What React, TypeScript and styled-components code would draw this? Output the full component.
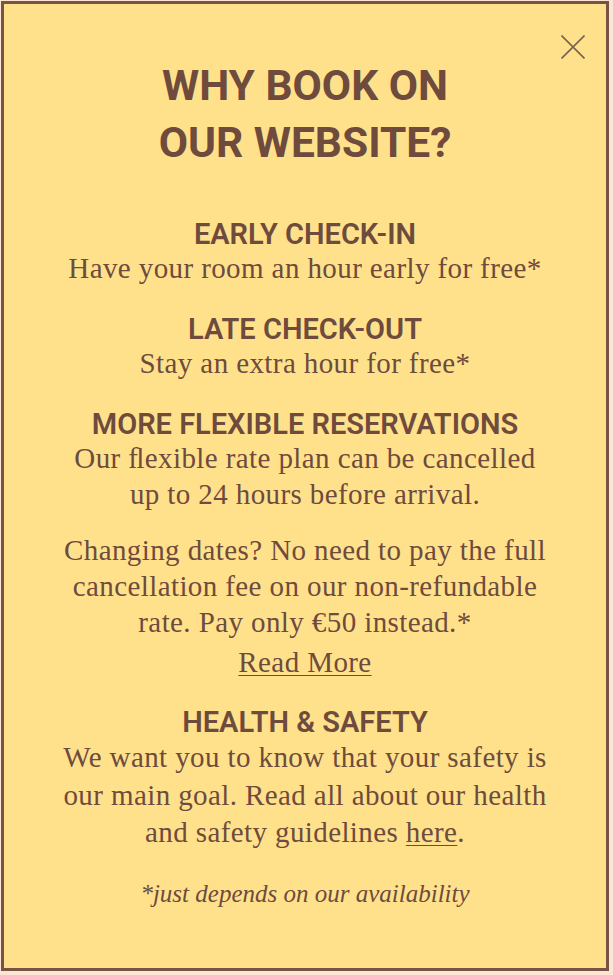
import React from "react";
import styled, { createGlobalStyle } from "styled-components";

const Global = createGlobalStyle`
  html, body { margin: 0; padding: 0; background: #fbe6d6; }
  #root { width: 613px; }
`;

const Card = styled.div`
  position: relative;
  box-sizing: border-box;
  margin: 1px 0 0 1px;
  width: 608px;
  height: 970px;
  border: 3px solid #785445;
  background: #ffe18c;
  color: #6e4b3d;
  display: flex;
  flex-direction: column;
  align-items: center;
  padding-top: 53px;
  text-align: center;
`;

const Close = styled.button`
  position: absolute;
  top: 31px;
  right: 21px;
  width: 24px;
  height: 24px;
  padding: 0;
  border: 0;
  background: transparent;
  cursor: pointer;
  display: flex;
`;

const Title = styled.h2`
  margin: 0 0 47px;
  font-family: Roboto, "Liberation Sans", sans-serif;
  font-weight: 700;
  font-size: 42.5px;
  line-height: 57px;
`;

const Section = styled.section<{ $gap?: number }>`
  display: flex;
  flex-direction: column;
  align-items: center;
  margin-bottom: ${(p) => p.$gap ?? 27}px;
`;

const Heading = styled.h3`
  margin: 0;
  font-family: Roboto, "Liberation Sans", sans-serif;
  font-weight: 600;
  font-size: 29px;
  line-height: 32px;
`;

const Text = styled.p<{ $mt?: number; $lh?: number }>`
  margin: ${(p) => p.$mt ?? 0}px 0 0;
  font-family: "Liberation Serif", "Times New Roman", serif;
  font-size: 29px;
  letter-spacing: 0.4px;
  line-height: ${(p) => p.$lh ?? 36}px;
  white-space: nowrap;
`;

const Link = styled.a`
  color: inherit;
  text-decoration: underline;
  text-underline-offset: 3px;
  text-decoration-thickness: 1px;
`;

const Note = styled.p`
  margin: 0;
  font-family: "Liberation Serif", "Times New Roman", serif;
  font-style: italic;
  font-size: 25px;
  line-height: 32px;
`;

export default function App() {
  return (
    <>
      <Global />
      <Card>
        <Close aria-label="Close">
          <svg width="24" height="24" viewBox="0 0 24 24">
            <path d="M0.5 0.5 L23.5 23.5 M23.5 0.5 L0.5 23.5" stroke="#7a6150" strokeWidth="1.6" fill="none" />
          </svg>
        </Close>
        <Title>
          WHY BOOK ON
          <br />
          OUR WEBSITE?
        </Title>
        <Section>
          <Heading>EARLY CHECK-IN</Heading>
          <Text>Have your room an hour early for free*</Text>
        </Section>
        <Section>
          <Heading>LATE CHECK-OUT</Heading>
          <Text>Stay an extra hour for free*</Text>
        </Section>
        <Section $gap={26}>
          <Heading>MORE FLEXIBLE RESERVATIONS</Heading>
          <Text>
            Our ﬂexible rate plan can be cancelled
            <br />
            up to 24 hours before arrival.
          </Text>
          <Text $mt={20}>
            Changing dates? No need to pay the full
            <br />
            cancellation fee on our non-refundable
            <br />
            rate. Pay only €50 instead.*
          </Text>
          <Text $mt={4}>
            <Link href="#">Read More</Link>
          </Text>
        </Section>
        <Section $gap={26}>
          <Heading>HEALTH &amp; SAFETY</Heading>
          <Text $mt={1} $lh={37.5}>
            We want you to know that your safety is
            <br />
            our main goal. Read all about our health
            <br />
            and safety guidelines <Link href="#">here</Link>.
          </Text>
        </Section>
        <Note>*just depends on our availability</Note>
      </Card>
    </>
  );
}
